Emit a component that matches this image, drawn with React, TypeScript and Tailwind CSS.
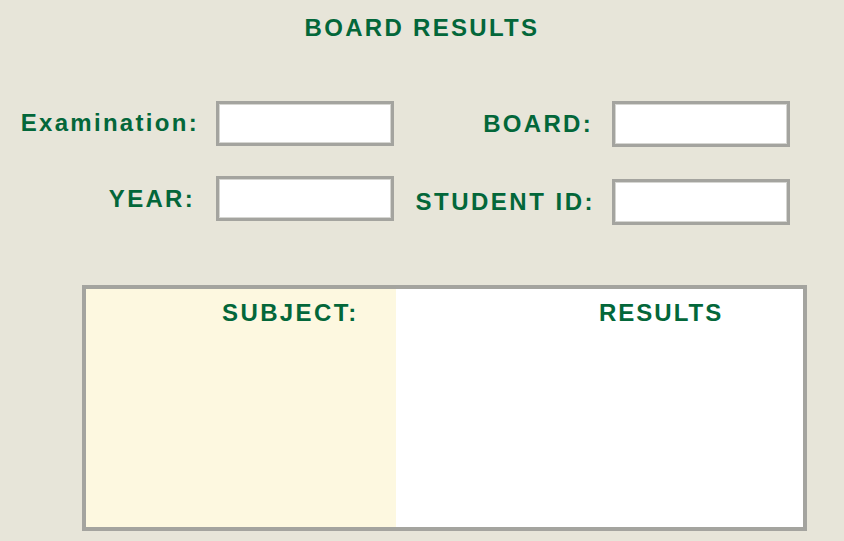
import React from "react";

const font = { fontFamily: '"Liberation Sans", Arial, sans-serif' };

function Box({ h }: { h: string }) {
  return (
    <div
      className={`ml-[17px] w-[178px] ${h} border-[3px] border-[#a4a49f] bg-white shadow-[inset_0_0_0_1px_#d6d6d2]`}
    />
  );
}

export default function App() {
  return (
    <div
      className="w-[844px] h-[541px] bg-[#e7e5d9] text-[#03673a] font-bold overflow-hidden"
      style={font}
    >
      <div className="pt-[16px] text-center text-[24px] leading-none tracking-[2.3px]">
        BOARD RESULTS
      </div>

      <div className="mt-[61px] flex">
        <div className="flex flex-col gap-[30px]">
          <div className="flex items-center">
            <div className="w-[199px] text-right text-[24px] leading-none tracking-[2.3px] -translate-y-[1px]">
              Examination:
            </div>
            <Box h="h-[45px]" />
          </div>
          <div className="flex items-center">
            <div className="w-[199px] pr-[4px] text-right text-[24px] leading-none tracking-[2.3px]">
              YEAR:
            </div>
            <Box h="h-[45px]" />
          </div>
        </div>
        <div className="flex flex-col gap-[32px]">
          <div className="flex items-center">
            <div className="w-[201px] pr-[2px] text-right text-[24px] leading-none tracking-[2.3px]">
              BOARD:
            </div>
            <Box h="h-[46px]" />
          </div>
          <div className="flex items-center">
            <div className="w-[201px] text-right text-[24px] leading-none tracking-[2.5px]">
              STUDENT ID:
            </div>
            <Box h="h-[46px]" />
          </div>
        </div>
      </div>

      <div className="mt-[60px] ml-[82px] w-[725px] h-[246px] border-4 border-[#a4a49f] flex">
        <div className="w-[310px] bg-[#fdf8e0] pt-[12px] pl-[136px] text-[24px] leading-none tracking-[2.4px]">
          SUBJECT:
        </div>
        <div className="flex-1 bg-white pt-[12px] pl-[203px] text-[24px] leading-none tracking-[2px]">
          RESULTS
        </div>
      </div>
    </div>
  );
}
